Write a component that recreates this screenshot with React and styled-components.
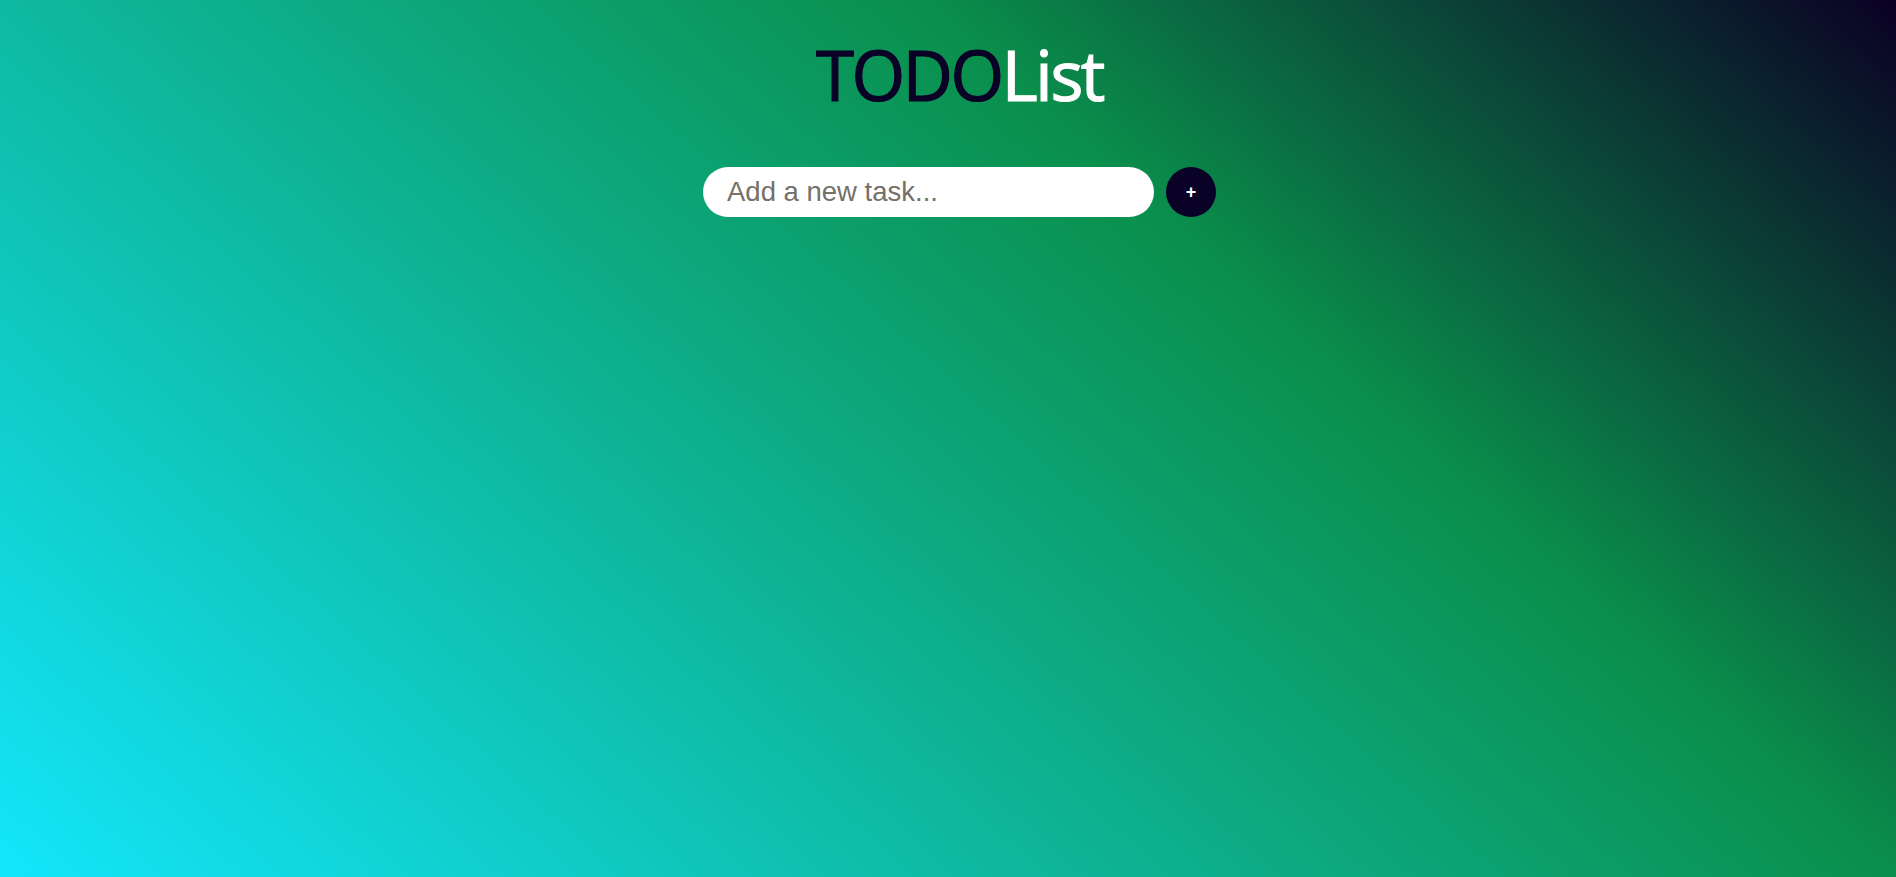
import React, { useState } from 'react';
import styled, { createGlobalStyle } from 'styled-components';

const GlobalStyle = createGlobalStyle`
  html, body {
    margin: 0;
    padding: 0;
  }
  body {
    min-height: 100vh;
    font-family: "Liberation Sans", Arial, sans-serif;
  }
`;

const Page = styled.div`
  min-height: 100vh;
  box-sizing: border-box;
  padding: 27px 0 0 23px;
  background: linear-gradient(42deg, #13e6fb 0%, #0a8f4c 66%, #0b0024 100%);
  display: flex;
  flex-direction: column;
  align-items: center;
`;

const Title = styled.h1`
  margin: 0;
  font-family: "Open Sans", "Noto Sans", sans-serif;
  font-weight: 400;
  font-size: 69px;
  line-height: 95px;
  letter-spacing: -2.4px;
  color: #ffffff;
  -webkit-text-stroke: 1.2px currentColor;
`;

const Dark = styled.span`
  color: #0a0126;
`;

const Form = styled.form`
  margin-top: 45px;
  display: flex;
  align-items: center;
  gap: 12px;
`;

const TaskInput = styled.input`
  width: 451px;
  height: 50px;
  box-sizing: border-box;
  border: none;
  border-radius: 25px;
  padding: 0 24px;
  background: #ffffff;
  font-family: "Liberation Sans", Arial, sans-serif;
  font-size: 27.5px;
  color: #333;
  outline: none;

  &::placeholder {
    color: #757068;
  }
`;

const AddButton = styled.button`
  width: 50px;
  height: 50px;
  border: none;
  border-radius: 50%;
  background: #0a0126;
  color: #ffffff;
  font-family: "Liberation Sans", Arial, sans-serif;
  font-size: 18px;
  font-weight: 700;
  display: flex;
  align-items: center;
  justify-content: center;
  cursor: pointer;
  padding: 0;
`;

export default function App() {
  const [task, setTask] = useState('');
  return (
    <>
      <GlobalStyle />
      <Page>
        <Title>
          <Dark>TODO</Dark>List
        </Title>
        <Form onSubmit={(e) => e.preventDefault()}>
          <TaskInput
            value={task}
            onChange={(e) => setTask(e.target.value)}
            placeholder="Add a new task..."
          />
          <AddButton type="submit">+</AddButton>
        </Form>
      </Page>
    </>
  );
}
